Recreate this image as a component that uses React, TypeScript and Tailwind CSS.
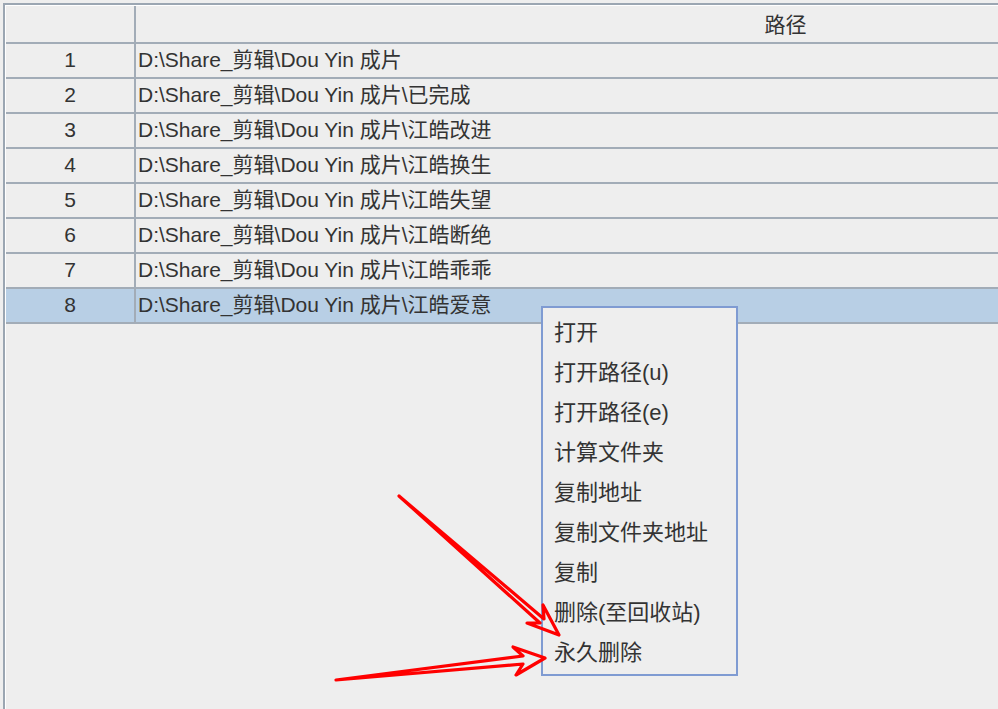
import React from "react";

const rows = [
  "D:\\Share_剪辑\\Dou Yin 成片",
  "D:\\Share_剪辑\\Dou Yin 成片\\已完成",
  "D:\\Share_剪辑\\Dou Yin 成片\\江皓改进",
  "D:\\Share_剪辑\\Dou Yin 成片\\江皓换生",
  "D:\\Share_剪辑\\Dou Yin 成片\\江皓失望",
  "D:\\Share_剪辑\\Dou Yin 成片\\江皓断绝",
  "D:\\Share_剪辑\\Dou Yin 成片\\江皓乖乖",
  "D:\\Share_剪辑\\Dou Yin 成片\\江皓爱意",
];

const menu = [
  "打开",
  "打开路径(u)",
  "打开路径(e)",
  "计算文件夹",
  "复制地址",
  "复制文件夹地址",
  "复制",
  "删除(至回收站)",
  "永久删除",
];

export default function App() {
  return (
    <div
      className="relative h-[709px] w-[998px] overflow-hidden bg-[#eeeeee] pl-[3px] pt-[3px] text-[#333333]"
      style={{ fontFamily: '"Liberation Sans", "Noto Sans CJK SC", sans-serif' }}
    >
      <div className="h-full w-[1440px] border-l-2 border-t-2 border-[#9ba6b2]">
        <div className="h-full border-l border-t border-white">
          <div className="flex h-[38px] border-b-2 border-[#a2acb7] text-[21px]">
            <div className="w-[130px] shrink-0 border-r-2 border-[#a2acb7]" />
            <div className="flex w-[1299px] shrink-0 items-center justify-center leading-none">
              路径
            </div>
          </div>
          {rows.map((r, i) => (
            <div
              key={i}
              className={
                "flex h-[35px] border-b-2 border-[#a2acb7] text-[21px] leading-none " +
                (i === 7 ? "bg-[#b8cfe5]" : "")
              }
            >
              <div className="flex w-[130px] shrink-0 items-center justify-center border-r-2 border-[#a2acb7] pb-[2px]">
                {i + 1}
              </div>
              <div className="flex items-center whitespace-pre pb-[2px] pl-[2px]">{r}</div>
            </div>
          ))}
        </div>
      </div>

      <div className="absolute left-[541px] top-[306px] w-[197px] border-2 border-[#7f9bd2] bg-[#eeeeee] pb-[1px] pt-[5px] text-[22px] leading-none">
        {menu.map((m) => (
          <div key={m} className="flex h-[40px] items-center whitespace-pre pl-[11px]">
            {m}
          </div>
        ))}
      </div>

      <svg
        className="pointer-events-none absolute left-0 top-0"
        width="998"
        height="709"
        viewBox="0 0 998 709"
      >
        <polygon
          points="399,496 540,623 527,623 559,635 543,605 544,619"
          fill="none"
          stroke="#ff0000"
          strokeWidth="3.2"
          strokeLinejoin="round"
        />
        <polygon
          points="336,680 523,664 516,675 545,658 513,647 523,656"
          fill="none"
          stroke="#ff0000"
          strokeWidth="3.2"
          strokeLinejoin="round"
        />
      </svg>
    </div>
  );
}
